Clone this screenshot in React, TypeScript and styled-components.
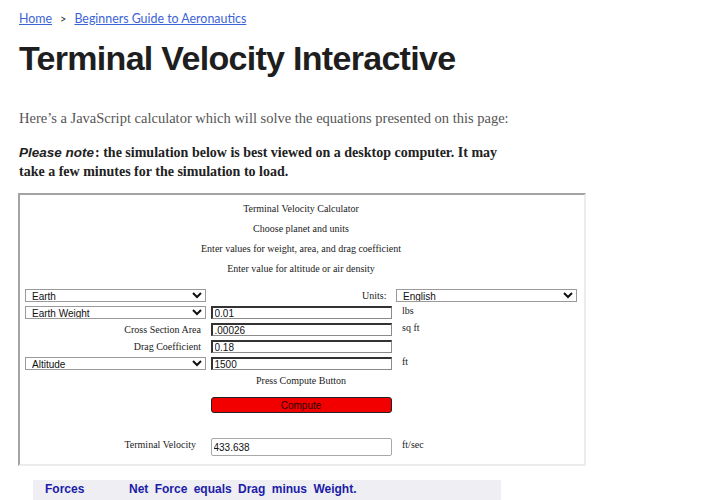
import React from "react";
import styled, { createGlobalStyle } from "styled-components";

const Global = createGlobalStyle`
  html, body { margin: 0; padding: 0; background: #fff; }
  body { font-family: "Liberation Serif", serif; }
`;

const Page = styled.div`
  padding: 10px 0 0 19px;
  width: 682px;
  box-sizing: border-box;
`;

const Crumbs = styled.nav`
  display: flex;
  align-items: center;
  gap: 8px;
  font-family: "Lato", "Noto Sans", sans-serif;
  font-size: 12.4px;
  line-height: 17px;
  color: #444;
`;

const CrumbLink = styled.a`
  color: #3b63d6;
  text-decoration: underline;
`;

const Sep = styled.span`
  font-size: 11px;
  color: #333;
`;

const Title = styled.h1`
  margin: 11px 0 0 0;
  font-family: "Liberation Sans", Arial, sans-serif;
  font-weight: 700;
  font-size: 34px;
  line-height: 40px;
  letter-spacing: -0.7px;
  color: #1e1e1e;
`;

const Intro = styled.p`
  margin: 31px 0 0 0;
  font-family: "Liberation Serif", serif;
  font-size: 14.5px;
  line-height: 19px;
  color: #555;
`;

const Note = styled.p`
  margin: 15px 0 0 0;
  width: 500px;
  font-family: "Liberation Serif", serif;
  font-weight: 700;
  font-size: 14px;
  line-height: 19px;
  color: #222;
`;

const NoteEm = styled.em`
  font-family: "Liberation Sans", sans-serif;
  font-size: 13.5px;
  margin-right: 1px;
`;

const Frame = styled.div`
  margin: 12px 0 0 -1px;
  width: 568px;
  height: 273px;
  box-sizing: border-box;
  border-style: solid;
  border-width: 2px;
  border-color: #a3a3a3 #ececec #ececec #a3a3a3;
  padding: 4px 7px 0 5px;
  font-family: "Liberation Serif", serif;
  font-size: 10px;
  color: #222;
`;

const CenterLine = styled.div`
  text-align: center;
  height: 20px;
  line-height: 20px;
`;

const Grid = styled.div`
  margin-top: 8px;
  display: grid;
  grid-template-columns: 181px 181px 181px;
  column-gap: 4.5px;
  grid-auto-rows: 17px;
  align-items: center;
`;

const Select = styled.select`
  width: 181px;
  height: 13px;
  box-sizing: border-box;
  font-family: "Liberation Sans", Arial, sans-serif;
  font-size: 10px;
  padding: 0 0 0 2px;
  border: 1px solid #9a9a9a;
  border-radius: 0;
  background: #fff;
  color: #111;
`;

const Input = styled.input<{ $soft?: boolean }>`
  width: 181px;
  height: ${(p) => (p.$soft ? "18px" : "13px")};
  box-sizing: border-box;
  font-family: "Liberation Sans", Arial, sans-serif;
  font-size: 10px;
  padding: 0 2px;
  margin: 0;
  background: #fff;
  color: #111;
  border-style: solid;
  border-width: ${(p) => (p.$soft ? "1px" : "2px 1px 1px 2px")};
  border-color: ${(p) => (p.$soft ? "#a8a8a8" : "#333 #8a8a8a #8a8a8a #333")};
  border-radius: ${(p) => (p.$soft ? "2px" : "0")};
`;

const Label = styled.div<{ $align: "left" | "right" }>`
  text-align: ${(p) => p.$align};
  padding: ${(p) => (p.$align === "right" ? "0 5px 0 0" : "0 0 0 6px")};
  line-height: 12px;
  align-self: ${(p) => (p.$align === "left" ? "start" : "center")};
  padding-top: ${(p) => (p.$align === "left" ? "1px" : "0")};
`;

const Empty = styled.div``;

const PressLine = styled.div`
  margin-top: 0;
  height: 18px;
  line-height: 18px;
  text-align: center;
`;

const ButtonRow = styled.div`
  display: grid;
  grid-template-columns: 181px 181px 181px;
  column-gap: 4.5px;
  margin-top: 7px;
`;

const Compute = styled.button`
  grid-column: 2;
  width: 181px;
  height: 16px;
  padding: 0;
  background: #f20000;
  border: 1px solid #222;
  border-radius: 3px;
  font-family: "Liberation Sans", Arial, sans-serif;
  font-size: 10px;
  color: #2a0000;
`;

const ResultRow = styled.div`
  display: grid;
  grid-template-columns: 181px 181px 181px;
  column-gap: 4.5px;
  margin-top: 25px;
  align-items: start;
`;

const ResultLabel = styled.div<{ $align: "left" | "right" }>`
  text-align: ${(p) => p.$align};
  padding: ${(p) => (p.$align === "right" ? "1px 10px 0 0" : "1px 0 0 6px")};
  line-height: 12px;
`;

const Strip = styled.div`
  margin: 14px 0 0 14px;
  width: 468px;
  height: 30px;
  background: #eeeef3;
  display: flex;
  align-items: flex-start;
  padding-top: 2px;
  box-sizing: border-box;
  font-family: "Liberation Sans", Arial, sans-serif;
  font-weight: 700;
  font-size: 12px;
  color: #1c1ca8;
`;

const StripHead = styled.span`
  width: 84px;
  padding-left: 12px;
`;

const StripText = styled.span`
  word-spacing: 3px;
`;

export default function App() {
  return (
    <>
      <Global />
      <Page>
        <Crumbs>
          <CrumbLink href="#">Home</CrumbLink>
          <Sep>&gt;</Sep>
          <CrumbLink href="#">Beginners Guide to Aeronautics</CrumbLink>
        </Crumbs>
        <Title>Terminal Velocity Interactive</Title>
        <Intro>Here’s a JavaScript calculator which will solve the equations presented on this page:</Intro>
        <Note>
          <NoteEm>Please note</NoteEm>: the simulation below is best viewed on a desktop computer. It may take a few minutes for the simulation to load.
        </Note>
        <Frame>
          <CenterLine>Terminal Velocity Calculator</CenterLine>
          <CenterLine>Choose planet and units</CenterLine>
          <CenterLine>Enter values for weight, area, and drag coefficient</CenterLine>
          <CenterLine>Enter value for altitude or air density</CenterLine>
          <Grid>
            <Select defaultValue="Earth">
              <option>Earth</option>
              <option>Mars</option>
            </Select>
            <Label $align="right">Units:</Label>
            <Select defaultValue="English">
              <option>English</option>
              <option>Metric</option>
            </Select>

            <Select defaultValue="Earth Weight">
              <option>Earth Weight</option>
              <option>Mass</option>
            </Select>
            <Input defaultValue="0.01" />
            <Label $align="left">lbs</Label>

            <Label $align="right">Cross Section Area</Label>
            <Input defaultValue=".00026" />
            <Label $align="left">sq ft</Label>

            <Label $align="right">Drag Coefficient</Label>
            <Input defaultValue="0.18" />
            <Empty />

            <Select defaultValue="Altitude">
              <option>Altitude</option>
              <option>Density</option>
            </Select>
            <Input defaultValue="1500" />
            <Label $align="left">ft</Label>
          </Grid>
          <PressLine>Press Compute Button</PressLine>
          <ButtonRow>
            <Compute>Compute</Compute>
          </ButtonRow>
          <ResultRow>
            <ResultLabel $align="right">Terminal Velocity</ResultLabel>
            <Input $soft defaultValue="433.638" />
            <ResultLabel $align="left">ft/sec</ResultLabel>
          </ResultRow>
        </Frame>
        <Strip>
          <StripHead>Forces</StripHead>
          <StripText>Net Force equals Drag minus Weight.</StripText>
        </Strip>
      </Page>
    </>
  );
}
